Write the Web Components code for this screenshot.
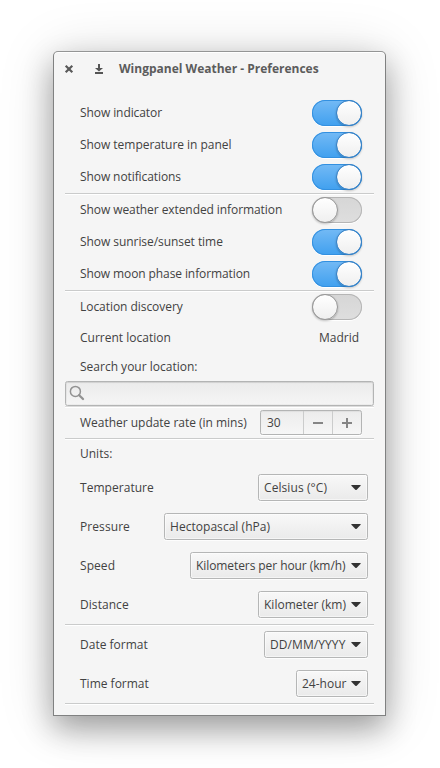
<!DOCTYPE html>
<html lang="en">
<head>
<meta charset="utf-8">
<title>Wingpanel Weather - Preferences</title>
<style>
html,body{margin:0;background:#fff}
body{width:440px;height:768px;overflow:hidden;box-sizing:border-box;padding:51px 54px 0 53px;font:12px/16px "Open Sans","Noto Sans",sans-serif;color:#424242}
</style>
</head>
<body>
<pref-window>
  <title-bar slot="header">Wingpanel Weather - Preferences</title-bar>
  <pref-row style="--h:32px;--ls:-.08px">Show indicator<toggle-switch slot="control" on></toggle-switch></pref-row>
  <pref-row style="--h:32px;--ls:-.04px">Show temperature in panel<toggle-switch slot="control" on></toggle-switch></pref-row>
  <pref-row style="--h:32px;--ls:-.09px">Show notifications<toggle-switch slot="control" on></toggle-switch></pref-row>
  <pref-rule></pref-rule>
  <pref-row style="--h:32px;--ls:-.08px">Show weather extended information<toggle-switch slot="control"></toggle-switch></pref-row>
  <pref-row style="--h:32px;--ls:-.06px">Show sunrise/sunset time<toggle-switch slot="control" on></toggle-switch></pref-row>
  <pref-row style="--h:32px;--ls:-.1px">Show moon phase information<toggle-switch slot="control" on></toggle-switch></pref-row>
  <pref-rule></pref-rule>
  <pref-row style="--h:32px;--ls:-.05px">Location discovery<toggle-switch slot="control"></toggle-switch></pref-row>
  <pref-row style="--h:29px;--r:15px">Current location<span slot="control">Madrid</span></pref-row>
  <pref-row style="--h:29px">Search your location:</pref-row>
  <search-entry></search-entry>
  <pref-rule style="--line:#dcdcdc"></pref-rule>
  <pref-row style="--h:31px;--ls:-.02px">Weather update rate (in mins)<spin-button slot="control">30</spin-button></pref-row>
  <pref-rule></pref-rule>
  <pref-row style="--h:29px">Units:</pref-row>
  <pref-row style="--h:39px;--r:6px;--ls:.04px">Temperature<combo-box slot="control" style="--w:110px;--cs:.08px">Celsius (°C)</combo-box></pref-row>
  <pref-row style="--h:39px;--r:6px;--ls:.08px">Pressure<combo-box slot="control" style="--w:204px;--cs:.04px">Hectopascal (hPa)</combo-box></pref-row>
  <pref-row style="--h:39px;--r:6px;--ls:.06px">Speed<combo-box slot="control" style="--w:178px;--cs:-.08px">Kilometers per hour (km/h)</combo-box></pref-row>
  <pref-row style="--h:39px;--r:6px;--ls:.06px">Distance<combo-box slot="control" style="--w:110px;--cs:0px">Kilometer (km)</combo-box></pref-row>
  <pref-rule></pref-rule>
  <pref-row style="--h:39px;--r:6px">Date format<combo-box slot="control" style="--w:104px;--cs:.08px">DD/MM/YYYY</combo-box></pref-row>
  <pref-row style="--h:39px;--r:6px">Time format<combo-box slot="control" style="--w:72px">24-hour</combo-box></pref-row>
  <pref-rule></pref-rule>
</pref-window>
<script>
const define = (name, html) => customElements.define(name, class extends HTMLElement {
  constructor() {
    super();
    this.attachShadow({ mode: 'open' }).innerHTML = html;
  }
});

define('pref-window', `<style>
:host{display:flex;flex-direction:column;box-sizing:border-box;height:665px;background:#f5f5f5;border:1px solid #808181;border-top-color:#949595;border-radius:5px 5px 0 0;
box-shadow:inset 0 1px #fff,0 13px 30px rgba(0,0,0,.32),0 4px 56px rgba(0,0,0,.15)}
main{display:flex;flex-direction:column;padding:11px 11px 0}
</style><slot name="header"></slot><main><slot></slot></main>`);

define('title-bar', `<style>
:host{display:flex;align-items:center;height:34px;padding-left:10px;font-weight:700;color:#5c5c5c}
svg{display:block;width:10px;height:10px;flex:none}
.dl{margin-left:20px}
span{margin-left:15px;white-space:nowrap}
</style>
<svg viewBox="0 0 10 10"><path d="M1.7 1.7 8.3 8.3M8.3 1.7 1.7 8.3" stroke="#5a5a5a" stroke-width="2.2" fill="none"/></svg>
<svg class="dl" viewBox="0 0 10 10"><path d="M4 0h2v4h3L5 7.6 1 4h3zM1 8h8v2H1z" fill="#555"/></svg>
<span><slot></slot></span>`);

define('pref-row', `<style>
:host{display:flex;align-items:center;justify-content:space-between;height:var(--h);padding:0 var(--r,12px) 0 15px;white-space:nowrap}
span{letter-spacing:var(--ls,0)}
</style><span><slot></slot></span><slot name="control"></slot>`);

define('pref-rule', `<style>
:host{display:block;height:1px;background:var(--line,#cacbcb);box-shadow:0 1px #fff}
</style>`);

define('toggle-switch', `<style>
:host{display:flex;box-sizing:border-box;width:50px;height:26px;border-radius:13px;background:linear-gradient(#d6d6d6,#dedede);box-shadow:inset 0 0 0 1px #b5b5b5,0 1px #fff}
i{box-sizing:border-box;width:26px;height:26px;border-radius:50%;background:linear-gradient(#fff,#efefef);border:1px solid #999;background-clip:padding-box;box-shadow:0 1px 2px rgba(0,0,0,.25)}
:host([on]){justify-content:flex-end;background:linear-gradient(#74baf5,#40a0ef);box-shadow:inset 0 0 0 1px #3390e0,0 1px #fff}
:host([on]) i{border-color:#3a80c2}
</style><i></i>`);

define('search-entry', `<style>
:host{display:flex;align-items:center;box-sizing:border-box;height:25px;padding-left:3px;border:1px solid #b3b4b4;border-radius:2.5px;background:linear-gradient(#ebebeb,#f5f5f5);box-shadow:inset 0 1px 1px rgba(0,0,0,.08),inset 0 0 0 1px rgba(0,0,0,.035)}
svg{display:block;width:16px;height:16px;margin-top:-1px}
</style><svg viewBox="0 0 16 16" fill="none" stroke="#929292"><circle cx="6.4" cy="6.4" r="5" stroke-width="1.5"/><path d="M10.2 10.2l3.8 3.8" stroke-width="2.3" stroke-linecap="round"/></svg>`);

define('spin-button', `<style>
:host{display:grid;grid-template-columns:42px 29px 29px;box-sizing:border-box;width:102px;height:25px;border:1px solid #b3b4b4;border-radius:2.5px;background:linear-gradient(#ececec,#f6f6f6);box-shadow:inset 0 1px 1px rgba(0,0,0,.06),0 1px #fff}
span{padding-left:6px;line-height:23px}
b{display:flex;align-items:center;justify-content:center;border-left:1px solid #cbcccc}
svg{width:12px;height:12px}
</style><span><slot></slot></span>
<b><svg viewBox="0 0 12 12"><path d="M1 5h10v2H1z" fill="#858585"/></svg></b>
<b><svg viewBox="0 0 12 12"><path d="M1 5h4V1h2v4h4v2H7v4H5V7H1z" fill="#858585"/></svg></b>`);

define('combo-box', `<style>
:host{display:flex;align-items:center;justify-content:space-between;box-sizing:border-box;width:var(--w);height:27px;padding:0 6px 0 5px;border:1px solid #b5b6b6;border-radius:2.5px;background:linear-gradient(#f8f8f8,#eaeaea);box-shadow:inset 0 0 0 1px rgba(255,255,255,.5),0 1px rgba(255,255,255,.8)}
span{letter-spacing:var(--cs,0)}
svg{display:block;width:10px;height:6px;flex:none;margin-top:1px}
</style><span><slot></slot></span><svg viewBox="0 0 10 6"><path d="M.4 0h9.2v.7L5.7 4.8Q5 5.4 4.3 4.8L.4.7z" fill="#333"/></svg>`);
</script>
</body>
</html>
